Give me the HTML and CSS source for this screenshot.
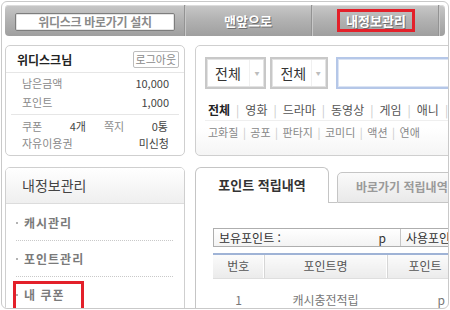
FILE: index.html
```html
<!DOCTYPE html>
<html lang="ko">
<head>
<meta charset="utf-8">
<title>내정보관리</title>
<link rel="stylesheet" href="styles.css">
</head>
<body>
<div class="frame">
  <header class="topbar">
    <div class="tb-left"><span class="install-btn">위디스크 바로가기 설치</span></div>
    <div class="tb-item"><span class="tb-text">맨앞으로</span></div>
    <div class="tb-item"><span class="tb-text hl">내정보관리</span></div>
  </header>
  <div class="main">
    <aside class="side">
      <section class="panel user">
        <div class="user-head"><span class="uname">위디스크님</span><span class="logout">로그아웃</span></div>
        <div class="user-sec sec1">
          <div class="kv"><span class="k">남은금액</span><span class="v">10,000</span></div>
          <div class="kv"><span class="k">포인트</span><span class="v">1,000</span></div>
        </div>
        <div class="user-sec sec2">
          <div class="kv4">
            <div class="kv"><span class="k">쿠폰</span><span class="v">4개</span></div>
            <div class="kv"><span class="k">쪽지</span><span class="v">0통</span></div>
          </div>
          <div class="kv"><span class="k">자유이용권</span><span class="v">미신청</span></div>
        </div>
      </section>
      <section class="panel menu">
        <h2 class="menu-head">내정보관리</h2>
        <ul class="menu-list">
          <li><span class="mi">캐시관리</span></li>
          <li><span class="mi">포인트관리</span></li>
          <li class="active"><span class="mi">내 쿠폰</span></li>
        </ul>
      </section>
    </aside>
    <div class="content">
      <section class="panel search">
        <div class="search-row">
          <div class="sel sel1"><span class="sel-text">전체</span><span class="arr">▼</span></div>
          <div class="sel sel2"><span class="sel-text">전체</span><span class="arr">▼</span></div>
          <div class="sinput"></div>
        </div>
        <div class="cats cats1"><b>전체</b><i>|</i>영화<i>|</i>드라마<i>|</i>동영상<i>|</i>게임<i>|</i>애니<i>|</i></div>
        <div class="cats cats2">고화질<i>|</i>공포<i>|</i>판타지<i>|</i>코미디<i>|</i>액션<i>|</i>연애</div>
      </section>
      <section class="tabs-area">
        <div class="tabs">
          <div class="tab on">포인트 적립내역</div>
          <div class="tab-gap"></div>
          <div class="tab off">바로가기 적립내역</div>
          <div class="tab-rest"></div>
        </div>
        <div class="tab-body">
          <div class="summary">
            <div class="sum-cell first"><span>보유포인트 :</span><span>p</span></div>
            <div class="sum-cell second"><span>사용포인트 :</span><span>p</span></div>
          </div>
          <table class="list">
            <colgroup><col class="c1"><col class="c2"><col class="c3"></colgroup>
            <thead>
              <tr><th>번호</th><th>포인트명</th><th>포인트</th></tr>
            </thead>
            <tbody>
              <tr><td>1</td><td>캐시충전적립</td><td class="pt">p</td></tr>
            </tbody>
          </table>
        </div>
      </section>
    </div>
  </div>
</div>
</body>
</html>
```

FILE: styles.css
```css
* { box-sizing: border-box; }
html, body { margin: 0; padding: 0; background: #fff; }
body { font-family: "Noto Sans CJK KR", "Noto Sans", sans-serif; color: #333; }

.frame {
  margin: 1px;
  width: 448px;
  height: 308px;
  border: 1px solid #c9c9c9;
  border-radius: 6px;
  overflow: hidden;
  padding: 3px;
}

/* top bar */
.topbar {
  display: flex;
  align-items: stretch;
  height: 31px;
  border-radius: 4px;
  background: linear-gradient(#c8c8c8 0%, #b3b3b3 45%, #9f9f9f 100%);
  box-shadow: inset 0 1px 0 #dcdcdc;
}
.tb-left {
  width: 180px;
  padding: 8px 0 0 10px;
  border-right: 1px solid #939393;
  box-shadow: 1px 0 0 #c8c8c8;
}
.install-btn {
  display: block;
  width: 160px;
  height: 18px;
  border: 1px solid #7d7d7d;
  border-radius: 2px;
  background: #fff;
  box-shadow: inset 0 0 0 1px #e4e4e4;
  text-align: center;
  font-size: 12px;
  line-height: 16px;
  font-weight: bold;
  color: #8a8a8a;
  letter-spacing: -0.3px;
}
.tb-item {
  width: 127px;
  display: flex;
  align-items: center;
  justify-content: center;
  border-right: 1px solid #939393;
  box-shadow: 1px 0 0 #c8c8c8;
}
.tb-text {
  font-size: 13px;
  font-weight: bold;
  color: #fff;
  text-shadow: 1px 1px 0 #6f6f6f;
  line-height: 17px;
}
.tb-text.hl {
  display: inline-block;
  padding: 0 6px;
  height: 23px;
  line-height: 17px;
  border: 3px solid #e3202a;
  margin-left: 2px;
}

/* layout */
.main {
  display: flex;
  gap: 10px;
  margin-top: 9px;
}
.side { width: 180px; flex-shrink: 0; }
.content { width: 300px; flex-shrink: 0; }

.panel {
  border: 1px solid #cfcfcf;
  border-radius: 5px;
  background: #fff;
}

/* user box */
.user { height: 111px; }
.user-head {
  height: 27px;
  display: flex;
  align-items: center;
  justify-content: space-between;
  padding: 1px 5px 0 11px;
  border-bottom: 1px solid #e6e6e6;
}
.uname { font-size: 12px; font-weight: bold; color: #222; }
.logout {
  height: 17px;
  padding: 0 2px;
  border: 1px solid #bdbdbd;
  border-radius: 2px;
  font-size: 11px;
  line-height: 15px;
  color: #8a8a8a;
}
.user-sec { margin: 0 5px; padding: 0 10px 0 11px; }
.sec1 { padding-top: 1px; padding-bottom: 2px; border-bottom: 1px solid #e6e6e6; }
.sec1 .kv { line-height: 19px; }
.sec2 { padding-top: 3px; }
.sec2 .kv { line-height: 17px; }
.kv {
  display: flex;
  justify-content: space-between;
  font-size: 11px;
}
.kv .k { color: #8a8a8a; }
.kv .v { color: #444; }
.kv4 { display: grid; grid-template-columns: 64px 64px; column-gap: 18px; }

/* menu box */
.menu {
  margin-top: 11px;
  height: 200px;
  border-radius: 5px 5px 0 0;
}
.menu-head {
  margin: 0;
  height: 36px;
  padding-left: 16px;
  border-bottom: 1px solid #dcdcdc;
  border-radius: 4px 4px 0 0;
  background: linear-gradient(#ffffff, #efefef);
  font-size: 14px;
  font-weight: normal;
  line-height: 35px;
  color: #444;
}
.menu-list {
  list-style: none;
  margin: 0 11px 0 10px;
  padding: 1px 0 0;
}
.menu-list li {
  position: relative;
  height: 36px;
  display: flex;
  align-items: center;
  border-bottom: 1px dotted #c9c9c9;
}
.menu-list li::before {
  content: "";
  width: 2px;
  height: 2px;
  background: #b3b3b3;
  margin-right: 6px;
}
.mi {
  font-size: 12px;
  font-weight: bold;
  color: #7a7a7a;
  letter-spacing: 1px;
}
.menu-list li.active::after {
  content: "";
  position: absolute;
  left: -3px;
  top: 4px;
  width: 65px;
  height: 24px;
  border: 3px solid #e3202a;
}

/* search box */
.search {
  height: 111px;
  padding: 11px 0 0 9px;
  background: linear-gradient(#fff 75%, #f5f5f5);
  border-radius: 5px 0 0 5px;
}
.search-row { display: flex; height: 32px; }
.sel {
  position: relative;
  height: 32px;
  border: 2px solid #c8c8c8;
  box-shadow: inset 0 0 0 1px #e3e3e3;
  background: #fff;
  display: flex;
  align-items: center;
  justify-content: space-between;
}
.sel1 { width: 77px; }
.sel2 { width: 72px; margin-left: 4px; }
.sel-text { font-size: 14px; color: #333; padding-left: 8px; }
.arr {
  width: 14px;
  height: 26px;
  border-left: 1px solid #f0f0f0;
  font-size: 5px;
  color: #bdbdbd;
  line-height: 26px;
  text-align: center;
  margin-right: 1px;
}
.sinput {
  width: 200px;
  margin-left: 8px;
  border: 2px solid #b5c7e8;
  box-shadow: inset 0 0 0 1px #dbe4f4;
}
.cats { padding-left: 3px; white-space: nowrap; }
.cats i { font-style: normal; color: #c9c9c9; }
.cats1 {
  margin-top: 11px;
  font-size: 12px;
  line-height: 20px;
  color: #555;
  border-bottom: 1px solid #efefef;
}
.cats1 b { color: #222; }
.cats1 i { margin: 0 6px; }
.cats2 {
  font-size: 11px;
  line-height: 23px;
  color: #888;
}
.cats2 i { margin: 0 4.5px; }

/* tabs */
.tabs-area { margin-top: 11px; }
.tabs { display: flex; align-items: flex-end; }
.tab { text-align: center; font-weight: bold; }
.tab.on {
  width: 134px;
  height: 36px;
  border: 1px solid #c5c5c5;
  border-bottom: none;
  border-radius: 6px 6px 0 0;
  background: #fff;
  font-size: 13px;
  line-height: 33px;
  color: #333;
}
.tab-gap { width: 8px; border-bottom: 1px solid #c5c5c5; }
.tab.off {
  width: 140px;
  height: 31px;
  border: 1px solid #c5c5c5;
  border-radius: 5px 5px 0 0;
  background: linear-gradient(#fafafa, #e9e9e9);
  font-size: 12px;
  line-height: 28px;
  color: #9a9a9a;
  text-align: left;
  padding-left: 18px;
  white-space: nowrap;
}
.tab-rest { flex: 1; border-bottom: 1px solid #c5c5c5; }

.tab-body {
  height: 140px;
  border-left: 1px solid #c5c5c5;
  border-right: 1px solid #c5c5c5;
  padding: 25px 0 0 17px;
}
.summary {
  display: flex;
  width: 330px;
  height: 19px;
  border: 1px solid #aeaeae;
  background: linear-gradient(#fff, #f3f3f3);
  font-size: 12px;
  line-height: 17px;
  color: #333;
  white-space: nowrap;
}
.sum-cell {
  display: flex;
  justify-content: space-between;
  padding: 0 14px 0 5px;
  width: 187px;
  flex-shrink: 0;
}
.sum-cell.first { border-right: 1px solid #c6c6c6; }
.sum-cell.second { width: 141px; }

.list {
  margin-top: 6px;
  width: 250px;
  border-collapse: collapse;
  table-layout: fixed;
  border-top: 2px solid #9fb3d6;
  font-size: 12px;
}
.list col.c1 { width: 51px; }
.list col.c2 { width: 123px; }
.list col.c3 { width: 76px; }
.list th {
  height: 24px;
  padding: 0;
  font-weight: normal;
  color: #555;
  background: linear-gradient(#fbfbfb, #ebebeb);
  border-bottom: 1px solid #dedede;
  border-right: 1px solid #d6d6d6;
  box-shadow: inset -1px 0 0 #fff;
  line-height: 22px;
}
.list td {
  height: 42px;
  padding: 0;
  text-align: center;
  color: #777;
}
.list td.pt { text-align: right; padding-right: 18px; }
```
